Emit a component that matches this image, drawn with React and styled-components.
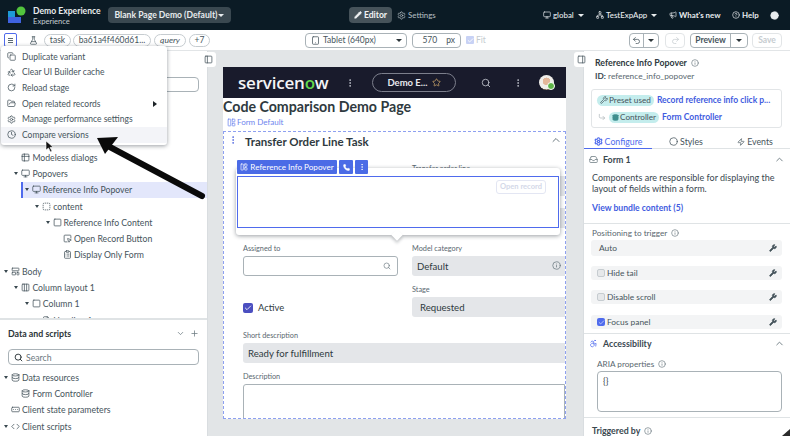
import React from "react";
import styled, { createGlobalStyle } from "styled-components";
import {
  Pencil, Settings, Monitor, Network, Megaphone, CircleHelp, ChevronDown, ChevronUp, Plus, Search,
  FlaskConical, Tablet, Undo2, Redo2, Copy, Recycle, RotateCw, FolderOpen, Clock, Info, Wrench,
  Database, Star, EllipsisVertical, Check, Phone, LayoutPanelLeft, PanelLeft, PanelRight, Circle, Zap,
  Inbox, Accessibility, SquareMousePointer, ClipboardList, LayoutTemplate, Columns3, Square, Code, SquareDashed, Table2,
  RectangleEllipsis, CornerDownRight, Contrast, FileText,
} from "lucide-react";

const Global = createGlobalStyle`
  html, body { margin: 0; padding: 0; background: #fff; }
  body { font-family: Lato, "Open Sans", sans-serif; color: #2b3438; }
  * { box-sizing: border-box; }
  #root { width: 790px; height: 436px; overflow: hidden; }
`;

const Page = styled.div`
  position: relative; width: 790px; height: 436px; overflow: hidden;
  display: flex; flex-direction: column; font-size: 10px;
`;

/* top bar */
const TopBar = styled.header`
  height: 30px; flex: none; background: #0b1b25; color: #dfe3e6;
  display: flex; align-items: center; padding-left: 8px;
`;
const Logo = styled.svg`width: 18px; height: 18px; flex: none;`;
const Brand = styled.div`
  margin-left: 7px; width: 75px; display: flex; flex-direction: column; line-height: 10px; padding-top: 2px;
  strong { font-size: 8.6px; font-weight: 700; color: #e8ecee; white-space: nowrap; }
  span { font-size: 7.6px; color: #c6ced2; }
`;
const PageSelect = styled.div`
  width: 123px; height: 16px; border-radius: 4px; background: #3a4850; color: #e8ecee;
  display: flex; align-items: center; justify-content: center; gap: 1px;
  font-size: 8.6px; font-weight: 700; white-space: nowrap;
`;
const EditorBtn = styled.div`
  margin-left: 118px; width: 43px; height: 16px; border-radius: 4px; background: #46535a;
  color: #f1f3f4; font-weight: 700; font-size: 8.6px;
  display: flex; align-items: center; justify-content: center; gap: 2px;
`;
const TopItem = styled.div`
  display: flex; align-items: center; gap: 2px; white-space: nowrap; font-size: 7.9px; flex: none;
  width: ${p => p.$w}px;
  margin-left: ${p => p.$ml}px; color: ${p => (p.$dim ? "#aeb8bd" : "#e8ecee")};
  font-weight: ${p => (p.$bold ? 700 : 500)};
  svg { flex: none; }
`;

/* toolbar */
const ToolBar = styled.div`
  height: 21px; flex: none; background: #fff; border-bottom: 1px solid #e2e5e7;
  display: flex; align-items: center; padding-left: 4px;
`;
const MenuBtn = styled.div`
  width: 13px; height: 14px; border: 1px solid #4f6bed; border-radius: 2px;
  display: flex; flex-direction: column; align-items: center; justify-content: center; gap: 1px;
  i { display: block; width: 5px; height: 1px; background: #5b6a72; }
`;
const FlaskSlot = styled.div`
  margin-left: 9px; width: 14px; display: flex; justify-content: center; color: #4a5961;
`;
const Pill = styled.div`
  height: 13px; margin-left: ${p => p.$ml ?? 2}px; width: ${p => p.$w}px; flex: none;
  border: 1px solid #c6ccd0; border-radius: 7px; text-align: center;
  font-size: 8.5px; line-height: 11px; color: #46545c; white-space: nowrap;
  font-style: ${p => (p.$italic ? "italic" : "normal")};
`;
const OutlineBox = styled.div`
  height: 15px; flex: none; margin-left: ${p => p.$ml}px; width: ${p => p.$w}px;
  border: 1px solid ${p => p.$border || "#a9b2b7"}; border-radius: 4px;
  display: flex; align-items: center; font-size: 8.5px; color: #46545c; overflow: hidden;
`;
const SelectLabel = styled.span`
  flex: 1; display: flex; align-items: center; gap: 3px; padding-left: 5px; white-space: nowrap;
`;
const Caret = styled.i`
  display: block; width: 0; height: 0; flex: none;
  border-left: 3px solid transparent; border-right: 3px solid transparent;
  border-top: 3px solid ${p => p.$c || "#2b3438"};
  margin: 0 ${p => p.$m ?? 4}px 0 ${p => p.$ml ?? 0}px;
`;
const WidthBox = styled(OutlineBox)`
  justify-content: flex-end; gap: 9px; padding-right: 5px;
`;
const FitCheck = styled.div`
  margin-left: 5px; width: 8px; height: 8px; border-radius: 1px; background: #c8d2f5; flex: none;
  display: flex; align-items: center; justify-content: center; color: #fff;
`;
const FitLabel = styled.span`margin-left: 2px; width: 10px; flex: none; font-size: 8.5px; color: #c6ccd0;`;
const SegLeft = styled.div`
  flex: 1; height: 100%; display: flex; align-items: center; justify-content: center;
  border-right: ${p => (p.$plain ? "none" : "1px solid #a9b2b7")};
  color: ${p => (p.$plain ? "#c6ccd0" : "inherit")};
  font-weight: ${p => (p.$bold ? 700 : 400)};
`;
const SaveBtn = styled(OutlineBox)`
  justify-content: center; font-weight: 700; color: #c6ccd0;
`;

/* main */
const Main = styled.div`flex: 1; min-height: 0; display: flex;`;
const LeftPanel = styled.aside`
  width: 208px; flex: none; background: #fff; border-right: 1px solid #d9dde0;
  display: flex; flex-direction: column; overflow: hidden;
`;
const TreeArea = styled.div`
  height: 269px; flex: none; overflow: hidden; border-bottom: 2px solid #dfe3e5;
  padding-top: 98px; position: relative;
`;
const TreeRow = styled.div`
  height: 16.3px; flex: none; display: flex; align-items: center; gap: 2px;
  margin-left: ${p => (p.$active ? 21 : 0)}px;
  padding-left: ${p => p.$indent * 10.4 + 4 - (p.$active ? 21 : 0)}px; white-space: nowrap; font-size: 8.7px; color: #46545c;
  background: ${p => (p.$active ? "#e3e7fb" : "transparent")};
  box-shadow: ${p => (p.$active ? "inset 2px 0 0 #4f6bed" : "none")};
  svg { flex: none; color: #46545c; }
`;
const TreeCaret = styled.i`
  display: block; flex: none; width: 0; height: 0; margin-right: 1px;
  border-left: 2.5px solid transparent; border-right: 2.5px solid transparent;
  border-top: 3.5px solid #3a4850;
  visibility: ${p => (p.$hidden ? "hidden" : "visible")};
`;
const GhostSearch = styled.div`
  position: absolute; top: 26px; left: 8px; width: 191px; height: 15px;
  border: 1px solid #a9b2b7; border-radius: 4px;
`;
const DataHead = styled.div`
  display: flex; align-items: center; height: 27px; padding: 0 8px 0 8px;
  font-size: 8.8px; font-weight: 700; color: #2b3438;
  span { flex: 1; }
  svg { color: #6b7980; margin-left: 5px; }
`;
const DataSearch = styled.div`
  margin: 2px 8px 4px 8px; height: 16px; flex: none; border: 1px solid #a9b2b7; border-radius: 4px;
  display: flex; align-items: center; gap: 3px; padding-left: 5px; color: #6b7980; font-size: 8.7px;
  svg { color: #2b3438; }
`;

/* menu overlay */
const Menu = styled.div`
  position: absolute; left: 1px; top: 46px; width: 166px; height: 99px; z-index: 5;
  background: #fff; border-radius: 3px; box-shadow: 0 1px 4px rgba(30,40,50,.45);
  padding-top: 3px; display: flex; flex-direction: column;
`;
const MenuItem = styled.div`
  height: 15.6px; display: flex; align-items: center; gap: 6px; padding-left: 6px; position: relative;
  font-size: 8.5px; color: #46545c; background: ${p => (p.$hover ? "#f3f4f8" : "transparent")};
  svg { color: #46545c; flex: none; }
`;
const MenuArrow = styled.i`
  position: absolute; right: 10px; top: 5px; width: 0; height: 0;
  border-top: 3px solid transparent; border-bottom: 3px solid transparent; border-left: 4px solid #1c2327;
`;
const Annotation = styled.svg`position: absolute; left: 0; top: 0; width: 790px; height: 436px; z-index: 6; pointer-events: none;`;

/* canvas */
const Center = styled.main`
  width: 375px; flex: none; background: #e2e5e7; padding: 16px 0 0 15px; position: relative;
`;
const EdgeTab = styled.div`
  position: absolute; top: 1px; ${p => p.$side}: ${p => p.$off}px; width: 15px; height: 15px; z-index: 2;
  background: #fff; border-radius: 3px; display: flex; align-items: center; justify-content: center; color: #46545c;
`;
const Frame = styled.div`
  width: 343px; height: 352px; background: #fff; position: relative;
`;
const SnBar = styled.div`
  height: 31px; background: #191b2c; display: flex; align-items: center; color: #e6e8ee; position: relative;
`;
const SnLogo = styled.div`
  margin-left: 15px; width: 107px; font-family: "Open Sans", sans-serif; font-size: 17px; font-weight: 600;
  letter-spacing: -0.2px; color: #f4f5f6; line-height: 1;
  em { font-style: normal; color: #62d84e; }
`;
const SnPill = styled.div`
  margin-left: 17px; width: 84px; height: 19px; border: 1px solid #7c7f8c; border-radius: 10px;
  display: flex; align-items: center; justify-content: center; gap: 4px; font-size: 9.5px; font-weight: 700; white-space: nowrap;
  svg { color: #c9a66b; }
`;
const SnIconSlot = styled.div`margin-left: ${p => p.$ml}px; display: flex; color: #c3c6cf;`;
const Avatar = styled.div`
  margin-left: 16px; width: 15px; height: 15px; border-radius: 50%; position: relative; overflow: visible;
  background: radial-gradient(circle at 50% 42%, #e3b79a 0 32%, #f0eeea 34% 70%, #8d7b66 72%);
  &::after {
    content: ""; position: absolute; right: -1px; bottom: 0; width: 6px; height: 6px;
    border-radius: 50%; background: #5fb548; border: 1px solid #fff;
  }
`;
const PageTitle = styled.h1`
  margin: 0; height: 17px; font-size: 14.2px; line-height: 17px; font-weight: 700; color: #2f3a40; white-space: nowrap;
`;
const VariantLine = styled.div`
  height: 14px; padding-left: 4px; display: flex; align-items: center; gap: 1px; font-size: 8px; color: #6d85ee;
`;
const FormBox = styled.section`
  position: relative; height: 288px; border: 1px dashed #8ea0f0; overflow: hidden; padding-left: 19px;
  margin-top: 2px;
`;
const FormHead = styled.div`
  height: 18px; display: flex; align-items: center; font-size: 11.5px; font-weight: 700; color: #2f3a40;
  margin-left: -19px; padding-left: 21px; position: relative;
  > svg:first-child { position: absolute; left: 4px; top: 3px; color: #5068e0; }
  > svg:last-child { position: absolute; right: 3px; top: 2px; color: #6b7980; }
`;
const Row = styled.div`
  display: grid; grid-template-columns: ${p => (p.$wide ? "1fr" : "155px 1fr")}; column-gap: 14px; margin-top: ${p => p.$top}px;
  align-items: start;
`;
const Field = styled.div`display: flex; flex-direction: column;`;
const FieldLabel = styled.label`
  height: 13px; line-height: 12px; font-size: 7.3px; color: #59676f; white-space: nowrap;
`;
const ReadOnly = styled.div`
  height: 20px; border-radius: 3px 0 0 3px; background: #e4e6e9; display: flex; align-items: center;
  padding-left: ${p => p.$pl ?? 5}px; font-size: 9.6px; color: #2f3a40; position: relative;
  svg { position: absolute; right: 4px; top: 5px; color: #6b7980; }
`;
const Input = styled.div`
  height: ${p => p.$h || 20}px; border: 1px solid #a9b2b7; border-radius: ${p => p.$r || "3px"};
  display: flex; align-items: center; justify-content: flex-end; padding-right: 6px; color: #6b7980; flex: none;
`;
const ActiveLine = styled.div`
  display: flex; align-items: center; gap: 5px; font-size: 9.4px; color: #2f3a40; padding-top: 18px;
`;
const CheckBox = styled.div`
  width: ${p => p.$s || 10}px; height: ${p => p.$s || 10}px; border-radius: 2px; flex: none;
  background: ${p => (p.$on ? p.$c || "#4b4fc0" : "#e6e8ea")}; border: ${p => (p.$on ? "none" : "1px solid #c6ccd0")};
  color: #fff; display: flex; align-items: center; justify-content: center;
`;
const Popover = styled.div`
  position: absolute; left: 12px; top: 36px; width: 324px; height: 67px; background: #fff; z-index: 2;
  border-radius: 3px; box-shadow: 0 1px 4px rgba(30,40,50,.45); padding: 8px 1px 0 1px;
  &::after {
    content: ""; position: absolute; left: 157px; bottom: -4px; width: 8px; height: 8px;
    background: #fff; transform: rotate(45deg); box-shadow: 2px 2px 3px rgba(30,40,50,.22);
  }
`;
const PopInner = styled.div`
  height: 52px; border: 1px solid #4f6bed; position: relative;
`;
const OpenRecord = styled.div`
  position: absolute; right: 12px; top: 3px; width: 50px; height: 14px; border: 1px solid #e3e6f3; border-radius: 3px;
  color: #d3d8e8; font-size: 7.5px; font-weight: 700; text-align: center; line-height: 12px;
`;
const PopToolbar = styled.div`
  position: absolute; left: 13px; top: 28px; z-index: 3; display: flex; gap: 2px;
`;
const BlueTag = styled.div`
  height: 14px; width: ${p => p.$w}px; background: #4b6be6; color: #fff; border-radius: 1px;
  display: flex; align-items: center; justify-content: center; gap: 2px; font-size: 8.1px; white-space: nowrap;
`;

/* right panel */
const RightPanel = styled.aside`
  flex: 1; min-width: 0; background: #fff; border-left: 1px solid #d9dde0; overflow: hidden;
  display: flex; flex-direction: column;
`;
const InfoTitle = styled.div`
  margin: 6px 0 0 11px; height: 12px; display: flex; align-items: center; gap: 4px; font-size: 8.8px; font-weight: 700; color: #2f3a40;
  svg { color: #6b7980; }
`;
const IdLine = styled.div`
  margin: 2px 0 0 11px; height: 12px; line-height: 12px; font-size: 8.3px; color: #59676f;
  b { color: #3a4850; }
`;
const PresetBox = styled.div`
  margin: 7px 8px 0 7px; height: 39px; flex: none; border: 1px solid #e2e5e7; border-radius: 3px;
  display: flex; flex-direction: column; justify-content: center; gap: 3px; padding-left: 5px;
`;
const PresetRow = styled.div`display: flex; align-items: center; height: 14px; gap: 3px; white-space: nowrap; color: #a9b2b7;`;
const TealTag = styled.span`
  display: inline-flex; align-items: center; gap: 1px; height: 11px; padding: 0 3px; border-radius: 6px;
  background: #c4eded; color: #46545c; font-size: 8.2px;
`;
const BlueLink = styled.span`
  color: #3f5ce0; font-weight: 700; font-size: 8.5px; white-space: nowrap;
`;
const Tabs = styled.div`
  margin-top: 6px; height: 15px; flex: none; display: grid; grid-template-columns: 68px 68px 1fr;
  border-bottom: 1px solid #dfe3e5;
`;
const Tab = styled.div`
  display: flex; align-items: center; justify-content: center; gap: 2px; font-size: 8.8px; height: 15px;
  color: ${p => (p.$on ? "#4f6bed" : "#46545c")};
  border-bottom: ${p => (p.$on ? "1px solid #4f6bed" : "none")};
`;
const SectionHead = styled.div`
  height: 18px; flex: none; margin-top: ${p => p.$top || 0}px; display: flex; align-items: center; padding: 0 5px 0 5px;
  font-size: 8.8px; font-weight: 700; color: #3a4850; gap: 5px;
  span { flex: 1; }
  svg { color: #6b7980; flex: none; }
`;
const Para = styled.p`
  margin: 5px 8px 0 8px; font-size: 9px; line-height: 10.5px; color: #3a4850;
`;
const BundleLink = styled(BlueLink)`display: block; margin: 9px 0 0 8px; font-size: 8.6px; line-height: 11px;`;
const Divider = styled.div`height: 1px; flex: none; background: #dfe3e5; margin-top: ${p => p.$top}px;`;
const PropLabel = styled.div`
  margin: ${p => p.$top}px 0 0 ${p => p.$left || 8}px; height: 12px; flex: none; display: flex; align-items: center; gap: 4px; font-size: 8.2px; color: #59676f;
  svg { color: #6b7980; }
`;
const PropRow = styled.div`
  margin: ${p => p.$top || 0}px 8px 0 7px; height: ${p => p.$h}px; flex: none; background: #f3f4f5; border-radius: 3px;
  display: flex; align-items: center; gap: 2px; padding: 0 5px 0 6px; font-size: 8.4px; color: #46545c;
  span { flex: 1; padding-left: ${p => p.$pl || 0}px; }
  svg { color: #46545c; }
`;
const AriaBox = styled.div`
  margin: 1px 8px 0 13px; height: 41px; flex: none; border: 1px solid #a9b2b7; border-radius: 4px; padding: 3px 5px; font-size: 9px; color: #3a4850;
`;
const TriggerLabel = styled.div`
  margin: 7px 0 0 8px; display: flex; align-items: center; gap: 4px; font-size: 8.8px; font-weight: 700; color: #3a4850;
  svg { color: #6b7980; }
`;

const tree = [
  [1, "caretless", Table2, "Modeless dialogs"],
  [1, "", Monitor, "Popovers"],
  [2, "", Monitor, "Reference Info Popover", true],
  [3, "", SquareDashed, "content"],
  [4, "", Square, "Reference Info Content"],
  [5, "caretless", SquareMousePointer, "Open Record Button"],
  [5, "caretless", ClipboardList, "Display Only Form"],
  [0, "", LayoutTemplate, "Body"],
  [1, "", Columns3, "Column layout 1"],
  [2, "", Square, "Column 1"],
  [3, "caretless", FileText, "Heading 1"],
];

const data = [
  [0, "", Database, "Data resources"],
  [1, "caretless", Database, "Form Controller"],
  [0, "caretless", RectangleEllipsis, "Client state parameters"],
  [0, "", Code, "Client scripts"],
];

function Rows({ items }) {
  return items.map(([indent, c, Icon, label, active]) => (
    <TreeRow key={label} $indent={indent} $active={active}>
      <TreeCaret $hidden={c === "caretless"} />
      <Icon size={9} strokeWidth={2} />
      {label}
    </TreeRow>
  ));
}

export default function App() {
  return (
    <Page>
      <Global />
      <TopBar>
        <Logo viewBox="0 0 18 18">
          <rect x="0" y="5" width="7" height="7" fill="#1d9ad6" />
          <rect x="0" y="11" width="13" height="6" fill="#3f63e0" />
          <circle cx="13" cy="5" r="4.5" fill="#52c43d" />
        </Logo>
        <Brand><strong>Demo Experience</strong><span>Experience</span></Brand>
        <PageSelect>Blank Page Demo (Default)<Caret $c="#e8ecee" $m={0} /></PageSelect>
        <EditorBtn><Pencil size={8} fill="currentColor" />Editor</EditorBtn>
        <TopItem $ml={5} $w={38} $dim><Settings size={9} />Settings</TopItem>
        <TopItem $ml={108} $w={41}><Monitor size={8} />global<Caret $c="#e8ecee" $m={0} $ml={2} /></TopItem>
        <TopItem $ml={12} $w={62}><Network size={8} />TestExpApp<Caret $c="#e8ecee" $m={0} $ml={2} /></TopItem>
        <TopItem $ml={11} $w={53} $bold><Megaphone size={8} />What's new</TopItem>
        <TopItem $ml={10} $w={26} $bold><CircleHelp size={8} />Help</TopItem>
        <TopItem $ml={12} $w={9}><Contrast size={9} fill="#e8ecee" /></TopItem>
      </TopBar>

      <ToolBar>
        <MenuBtn><i /><i /><i /></MenuBtn>
        <FlaskSlot><FlaskConical size={9} /></FlaskSlot>
        <Pill $w={27} $ml={4}>task</Pill>
        <Pill $w={78}>ba61a4f460d61...</Pill>
        <Pill $w={32} $ml={3} $italic>query</Pill>
        <Pill $w={21} $ml={3}>+7</Pill>
        <OutlineBox $ml={95} $w={102}>
          <SelectLabel><Tablet size={9} />Tablet (640px)</SelectLabel><Caret />
        </OutlineBox>
        <WidthBox $ml={5} $w={49}><span>570</span><span>px</span></WidthBox>
        <FitCheck><Check size={7} strokeWidth={3} /></FitCheck>
        <FitLabel>Fit</FitLabel>
        <OutlineBox $ml={143} $w={30}>
          <SegLeft><Undo2 size={9} /></SegLeft><Caret $m={4} $ml={4} />
        </OutlineBox>
        <OutlineBox $ml={6} $w={20} $border="#e2e5e7">
          <SegLeft $plain><Redo2 size={9} /></SegLeft>
        </OutlineBox>
        <OutlineBox $ml={5} $w={58}>
          <SegLeft $bold>Preview</SegLeft><Caret $m={5} $ml={5} />
        </OutlineBox>
        <SaveBtn $ml={4} $w={30} $border="#e2e5e7">Save</SaveBtn>
      </ToolBar>

      <Main>
        <LeftPanel>
          <TreeArea>
            <GhostSearch />
            <Rows items={tree} />
          </TreeArea>
          <DataHead>
            <span>Data and scripts</span>
            <ChevronDown size={9} /><Plus size={9} />
          </DataHead>
          <DataSearch><Search size={9} strokeWidth={2.5} />Search</DataSearch>
          <Rows items={data} />
        </LeftPanel>

        <Center>
          <EdgeTab $side="left" $off={-7}><PanelLeft size={9} /></EdgeTab>
          <EdgeTab $side="right" $off={-6}><PanelRight size={9} /></EdgeTab>
          <Frame>
            <SnBar>
              <SnLogo>servicen<em>o</em>w</SnLogo>
              <SnIconSlot $ml={0}><EllipsisVertical size={10} /></SnIconSlot>
              <SnPill>Demo E...<Star size={9} /></SnPill>
              <SnIconSlot $ml={25}><Search size={10} /></SnIconSlot>
              <SnIconSlot $ml={22}><EllipsisVertical size={10} /></SnIconSlot>
              <Avatar />
            </SnBar>
            <PageTitle>Code Comparison Demo Page</PageTitle>
            <VariantLine><LayoutPanelLeft size={9} />Form Default</VariantLine>
            <FormBox>
              <FormHead>
                <EllipsisVertical size={10} />
                <span>Transfer Order Line Task</span>
                <ChevronUp size={12} />
              </FormHead>
              <Row $top={13}>
                <Field />
                <Field><FieldLabel>Transfer order line</FieldLabel><ReadOnly /></Field>
              </Row>
              <Row $top={-1}>
                <Field />
                <Field><FieldLabel>&nbsp;</FieldLabel><ReadOnly /></Field>
              </Row>
              <Row $top={15}>
                <Field>
                  <FieldLabel>Assigned to</FieldLabel>
                  <Input><Search size={8} /></Input>
                </Field>
                <Field>
                  <FieldLabel>Model category</FieldLabel>
                  <ReadOnly>Default<Info size={9} /></ReadOnly>
                </Field>
              </Row>
              <Row $top={8}>
                <ActiveLine>
                  <CheckBox $on><Check size={8} strokeWidth={2.5} /></CheckBox>Active
                </ActiveLine>
                <Field>
                  <FieldLabel>Stage</FieldLabel>
                  <ReadOnly $pl={8}>Requested</ReadOnly>
                </Field>
              </Row>
              <Row $top={13} $wide>
                <Field>
                  <FieldLabel>Short description</FieldLabel>
                  <ReadOnly>Ready for fulfillment</ReadOnly>
                </Field>
              </Row>
              <Row $top={8} $wide>
                <Field>
                  <FieldLabel>Description</FieldLabel>
                  <Input $h={40} $r="3px 0 0 0" />
                </Field>
              </Row>
              <PopToolbar>
                <BlueTag $w={100}><LayoutPanelLeft size={8} />Reference Info Popover</BlueTag>
                <BlueTag $w={14}><Phone size={7} fill="#fff" /></BlueTag>
                <BlueTag $w={13}><EllipsisVertical size={8} /></BlueTag>
              </PopToolbar>
              <Popover>
                <PopInner><OpenRecord>Open record</OpenRecord></PopInner>
              </Popover>
            </FormBox>
          </Frame>
        </Center>

        <RightPanel>
          <InfoTitle>Reference Info Popover<Info size={8} /></InfoTitle>
          <IdLine><b>ID:</b> reference_info_popover</IdLine>
          <PresetBox>
            <PresetRow>
              <TealTag><Wrench size={8} />Preset used</TealTag>
              <BlueLink>Record reference info click p...</BlueLink>
            </PresetRow>
            <PresetRow>
              <CornerDownRight size={8} style={{ marginLeft: 1 }} />
              <TealTag><Database size={7} fill="#3f8f8f" color="#3f8f8f" />Controller</TealTag>
              <BlueLink>Form Controller</BlueLink>
            </PresetRow>
          </PresetBox>
          <Tabs>
            <Tab $on><Settings size={9} strokeWidth={3} />Configure</Tab>
            <Tab><Circle size={9} />Styles</Tab>
            <Tab><Zap size={8} />Events</Tab>
          </Tabs>
          <SectionHead $top={1}><Inbox size={9} /><span>Form 1</span><ChevronUp size={11} /></SectionHead>
          <Para>Components are responsible for displaying the layout of fields within a form.</Para>
          <BundleLink>View bundle content (5)</BundleLink>
          <Divider $top={9} />
          <PropLabel $top={3}>Positioning to trigger<Info size={8} /></PropLabel>
          <PropRow $top={1} $h={16} $pl={2}><span>Auto</span><Wrench size={8} fill="#46545c" /></PropRow>
          <PropRow $top={10} $h={14}><CheckBox $s={8} /><span>Hide tail</span><Wrench size={8} fill="#46545c" /></PropRow>
          <PropRow $top={10} $h={14}><CheckBox $s={8} /><span>Disable scroll</span><Wrench size={8} fill="#46545c" /></PropRow>
          <PropRow $top={11} $h={14}><CheckBox $s={8} $on $c="#4f6bed"><Check size={7} color="#fff" /></CheckBox><span>Focus panel</span><Wrench size={8} fill="#46545c" /></PropRow>
          <Divider $top={4} />
          <SectionHead><Accessibility size={9} color="#4f6bed" /><span>Accessibility</span><ChevronUp size={11} /></SectionHead>
          <PropLabel $top={6} $left={13}>ARIA properties<Info size={8} /></PropLabel>
          <AriaBox>{"{}"}</AriaBox>
          <Divider $top={5} />
          <TriggerLabel>Triggered by<Info size={8} /></TriggerLabel>
        </RightPanel>
      </Main>

      <Menu>
        <MenuItem><Copy size={9} />Duplicate variant</MenuItem>
        <MenuItem><Recycle size={9} />Clear UI Builder cache</MenuItem>
        <MenuItem><RotateCw size={9} />Reload stage</MenuItem>
        <MenuItem><FolderOpen size={9} />Open related records<MenuArrow /></MenuItem>
        <MenuItem><Settings size={9} />Manage performance settings</MenuItem>
        <MenuItem $hover><Clock size={9} />Compare versions</MenuItem>
      </Menu>
      <Annotation viewBox="0 0 790 436">
        <path d="M202 196 L108 146" stroke="#0a0a0a" strokeWidth="6" strokeLinecap="round" fill="none" />
        <path d="M97 138 L118 137 L105 154 Z" fill="#0a0a0a" />
        <path d="M46 141 L46 150 L48.5 148 L50.5 152 L52 151 L50 147.5 L53 147 Z" fill="#111" stroke="#fff" strokeWidth=".6" />
        <path d="M790 429 L790 436 L782 436 Z" fill="#2b2b2b" />
      </Annotation>
    </Page>
  );
}
